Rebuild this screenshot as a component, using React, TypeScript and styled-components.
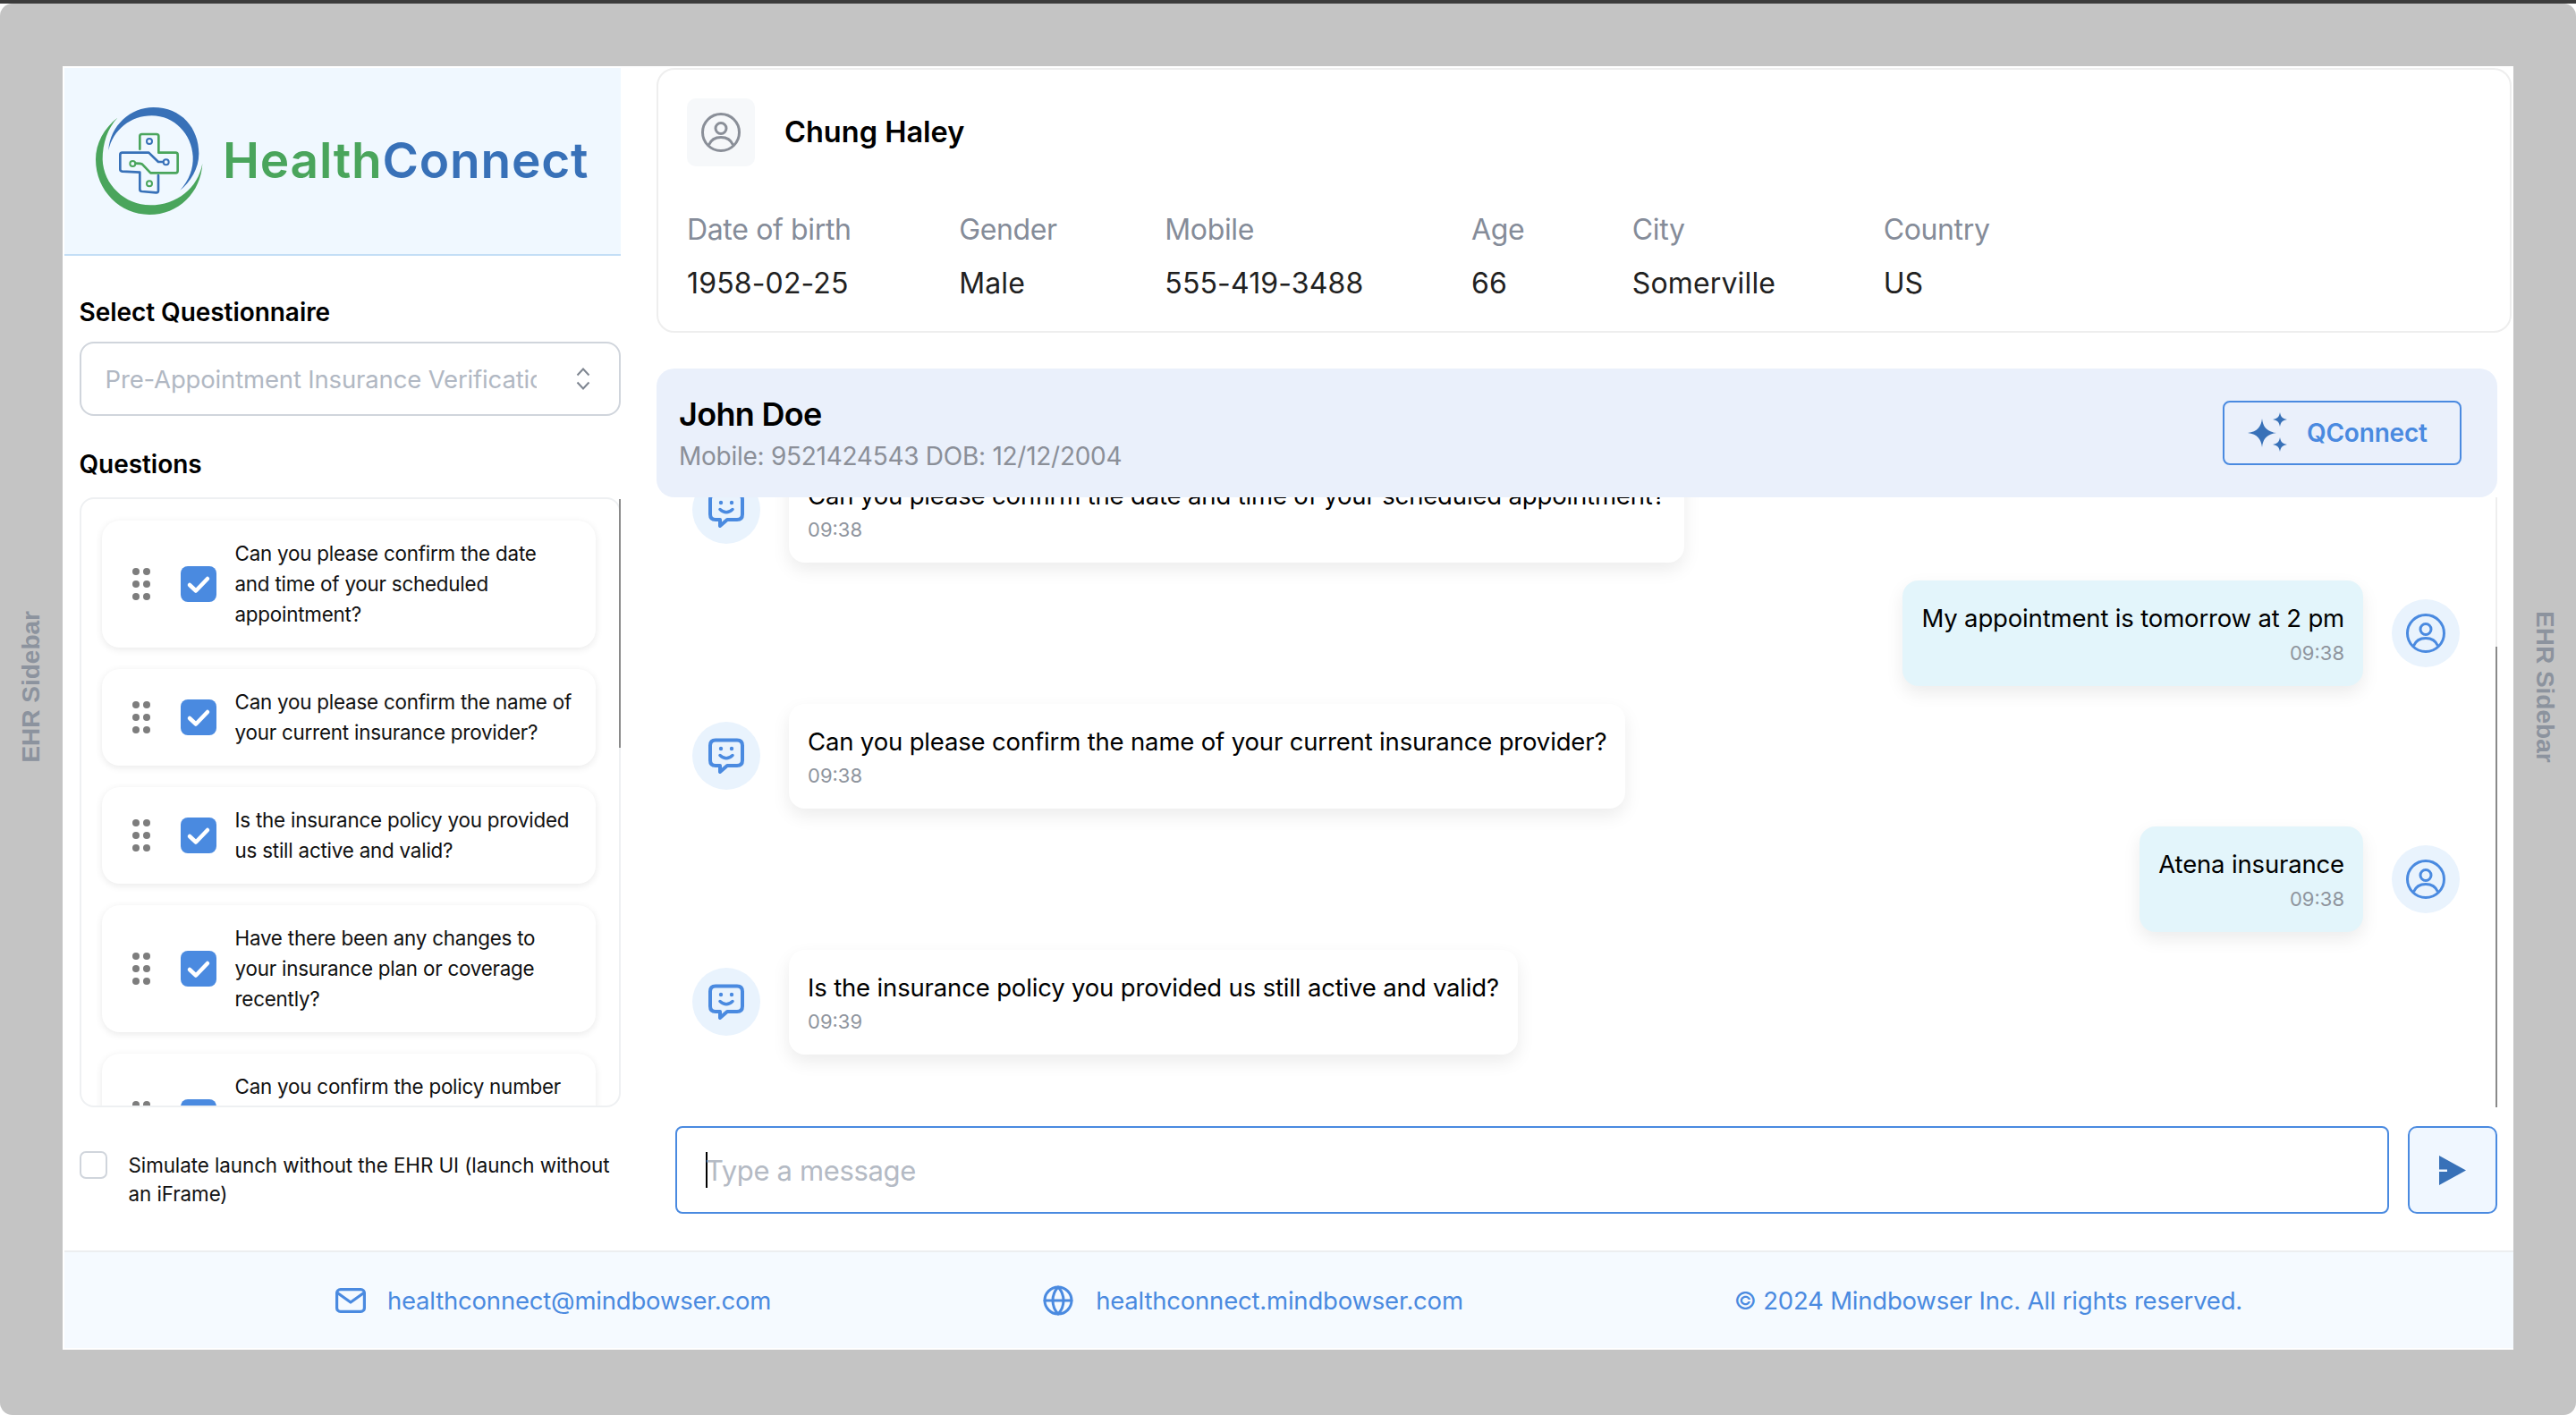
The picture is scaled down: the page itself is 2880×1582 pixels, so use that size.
import React from "react";
import styled, { createGlobalStyle } from "styled-components";
import { Globe } from "lucide-react";

const blue = "#4a8ae0";
const deepBlue = "#3871b8";
const green = "#4aa55c";

const questions = [
  "Can you please confirm the date and time of your scheduled appointment?",
  "Can you please confirm the name of your current insurance provider?",
  "Is the insurance policy you provided us still active and valid?",
  "Have there been any changes to your insurance plan or coverage recently?",
  "Can you confirm the policy number associated with your current insurance?",
];

const details = [
  { label: "Date of birth", value: "1958-02-25" },
  { label: "Gender", value: "Male" },
  { label: "Mobile", value: "555-419-3488" },
  { label: "Age", value: "66" },
  { label: "City", value: "Somerville" },
  { label: "Country", value: "US" },
];

const messages = [
  { from: "bot", text: "Can you please confirm the date and time of your scheduled appointment?", time: "09:38" },
  { from: "user", text: "My appointment is tomorrow at 2 pm", time: "09:38" },
  { from: "bot", text: "Can you please confirm the name of your current insurance provider?", time: "09:38" },
  { from: "user", text: "Atena insurance", time: "09:38" },
  { from: "bot", text: "Is the insurance policy you provided us still active and valid?", time: "09:39" },
];

const GlobalStyle = createGlobalStyle`
  html, body {
    margin: 0;
    padding: 0;
    background: #fff;
  }
  * {
    box-sizing: border-box;
  }
  body {
    font-family: Inter, "Liberation Sans", sans-serif;
  }
`;

const Screen = styled.div`
  width: 2880px;
  height: 1582px;
  display: flex;
  flex-direction: column;
  overflow: hidden;
`;

const TopEdge = styled.div`
  height: 4px;
  background: #3c3c3c;
`;

const Stage = styled.div`
  flex: 1;
  display: grid;
  grid-template-columns: 70px 2740px 70px;
  padding-top: 70px;
  background: #c4c4c4;
  border-radius: 14px;
`;

const Rail = styled.div<{ $flip?: boolean }>`
  display: flex;
  justify-content: center;
  align-items: flex-start;
  padding-top: 609px;

  span {
    writing-mode: vertical-rl;
    transform: ${({ $flip }) => ($flip ? "rotate(180deg)" : "none")};
    font-family: "Liberation Sans", Arial, sans-serif;
    font-size: 28px;
    font-weight: 700;
    color: #8c939e;
  }
`;

const AppFrame = styled.div`
  height: 1435px;
  display: flex;
  flex-direction: column;
  background: #fff;
`;

const Main = styled.div`
  height: 1324px;
  display: flex;
`;

const Sidebar = styled.aside`
  width: 624px;
  flex: none;
  padding: 2px 0 0 2px;
`;

const LogoBar = styled.div`
  height: 210px;
  display: flex;
  align-items: flex-start;
  padding: 44px 0 0 35px;
  background: #f0f8ff;
  border-bottom: 2px solid #c3def6;
`;

const LogoWord = styled.div`
  margin: 25px 0 0 22px;
  font-size: 55px;
  line-height: 68px;
  font-weight: 600;
  letter-spacing: 0.75px;
  color: ${deepBlue};

  b {
    font-weight: 600;
    color: ${green};
  }
`;

const Form = styled.div`
  padding-left: 16.5px;
`;

const FieldLabel = styled.div<{ $top: number; $bottom: number }>`
  margin: ${({ $top }) => $top}px 0 ${({ $bottom }) => $bottom}px;
  font-size: 28px;
  line-height: 36px;
  font-weight: 600;
  letter-spacing: -0.05px;
  color: #000;
`;

const Select = styled.div`
  height: 83px;
  display: flex;
  align-items: center;
  padding: 0 32px 0 27px;
  border: 2px solid #d0d5dc;
  border-radius: 16px;

  span {
    width: 482px;
    overflow: hidden;
    white-space: nowrap;
    font-size: 27.5px;
    letter-spacing: -0.16px;
    color: #b1b8c3;
  }

  svg {
    margin-left: auto;
  }
`;

const ListShell = styled.div`
  position: relative;
`;

const QuestionList = styled.div`
  height: 682px;
  overflow: hidden;
  display: flex;
  flex-direction: column;
  gap: 24px;
  padding: 24px 25px 0 23px;
  border: 2px solid #eef0f2;
  border-radius: 16px;
`;

const ListThumb = styled.div`
  position: absolute;
  top: 2px;
  right: 0;
  width: 2px;
  height: 278px;
  background: #8a8a8a;
`;

const QuestionCard = styled.div`
  flex: none;
  width: 552px;
  display: flex;
  align-items: center;
  padding: 20px 25px 20px 34px;
  background: #fff;
  border-radius: 20px;
  box-shadow: 0 2px 8px rgba(0, 0, 0, 0.09);
`;

const Grip = styled.div`
  flex: none;
  width: 20px;
  margin-right: 34px;
  display: grid;
  grid-template-columns: 8px 8px;
  gap: 6px 4px;

  i {
    height: 8px;
    border-radius: 50%;
    background: #7d7d7d;
  }
`;

const CheckTile = styled.div`
  flex: none;
  width: 40px;
  height: 40px;
  margin-right: 21px;
  border-radius: 8px;
  background: ${blue};
`;

const QuestionText = styled.div`
  font-size: 22.4px;
  line-height: 34px;
  letter-spacing: -0.22px;
  color: #111;
`;

const SimulateRow = styled.div`
  display: flex;
  margin-top: 49px;
  gap: 24px;
`;

const EmptyCheck = styled.div`
  flex: none;
  width: 31px;
  height: 31px;
  border: 2px solid #d0d5dc;
  border-radius: 7px;
`;

const SimulateText = styled.div`
  font-size: 22.4px;
  line-height: 32px;
  letter-spacing: -0.07px;
  color: #111;
`;

const Content = styled.section`
  flex: 1;
  min-width: 0;
  padding: 2px 2px 0 40px;
`;

const PatientCard = styled.div`
  height: 296px;
  padding: 32px;
  border: 2px solid #eeeeee;
  border-radius: 20px;
`;

const PatientHead = styled.div`
  display: flex;
  align-items: center;
  gap: 33px;
`;

const AvatarTile = styled.div`
  width: 76px;
  height: 76px;
  display: flex;
  align-items: center;
  justify-content: center;
  background: #f6f8fa;
  border-radius: 10px;
  color: #8a8f98;
`;

const PatientName = styled.div`
  margin-top: -2px;
  font-size: 32.5px;
  font-weight: 600;
  color: #000;
`;

const DetailRow = styled.div`
  display: flex;
  gap: 120.5px;
  margin-top: 51px;
`;

const DetailLabel = styled.div`
  font-size: 32px;
  line-height: 40px;
  letter-spacing: -0.35px;
  color: #858c99;
`;

const DetailValue = styled.div`
  margin-top: 20px;
  font-size: 32px;
  line-height: 40px;
  letter-spacing: 0.15px;
  color: #212121;
`;

const ChatPanel = styled.div`
  width: 2058px;
  margin-top: 40px;
`;

const ChatHeader = styled.div`
  position: relative;
  z-index: 1;
  height: 144px;
  display: flex;
  align-items: center;
  justify-content: space-between;
  padding: 0 40px 0 25px;
  background: #eaf0fb;
  border-radius: 20px;
`;

const ChatTitle = styled.div`
  font-size: 36px;
  line-height: 44px;
  font-weight: 600;
  letter-spacing: -0.7px;
  color: #000;
`;

const ChatSub = styled.div`
  margin-top: 7px;
  font-size: 28px;
  line-height: 36px;
  letter-spacing: -0.27px;
  color: #8b8f98;
`;

const QConnectButton = styled.button`
  width: 267px;
  height: 72px;
  display: flex;
  align-items: center;
  gap: 20px;
  padding: 0 0 0 26px;
  background: transparent;
  border: 2px solid ${blue};
  border-radius: 8px;
  font-family: inherit;
  font-size: 28px;
  font-weight: 600;
  letter-spacing: -0.2px;
  color: ${blue};
`;

const PaneShell = styled.div`
  position: relative;
`;

const MessagePane = styled.div`
  height: 682px;
  overflow: hidden;
  border-right: 2px solid #eeeeee;
`;

const PaneThumb = styled.div`
  position: absolute;
  top: 167px;
  right: 0;
  width: 2px;
  height: 515px;
  background: #8a8a8a;
`;

const MessageList = styled.div`
  display: flex;
  flex-direction: column;
  gap: 20px;
  margin-top: -44.5px;
`;

const Row = styled.div<{ $mine: boolean }>`
  display: flex;
  align-items: center;
  flex-direction: ${({ $mine }) => ($mine ? "row-reverse" : "row")};
  gap: 32px;
  padding: ${({ $mine }) => ($mine ? "0 40px 0 0" : "0 0 0 40px")};
`;

const AvatarCircle = styled.div`
  flex: none;
  width: 76px;
  height: 76px;
  display: flex;
  align-items: center;
  justify-content: center;
  border-radius: 50%;
  background: #e9f3fd;
  color: ${blue};
`;

const Bubble = styled.div<{ $mine: boolean }>`
  padding: 24px 21px 23px;
  text-align: ${({ $mine }) => ($mine ? "right" : "left")};
  background: ${({ $mine }) => ($mine ? "#e3f5fb" : "#fff")};
  border-radius: 18px;
  box-shadow: 0 8px 20px rgba(0, 0, 0, 0.08);
`;

const BubbleText = styled.div`
  font-size: 27.5px;
  line-height: 36px;
  letter-spacing: -0.16px;
  color: #000;
`;

const BubbleTime = styled.div`
  margin-top: 6.5px;
  font-size: 22px;
  line-height: 28px;
  color: #8f959e;
`;

const Composer = styled.div`
  display: flex;
  gap: 21px;
  margin-top: 21px;
  padding-left: 21px;
`;

const MessageInput = styled.div`
  flex: 1;
  height: 98px;
  display: flex;
  align-items: center;
  padding-left: 32px;
  border: 2px solid ${blue};
  border-radius: 8px;
  font-size: 31px;
  letter-spacing: -0.35px;
  color: #b4bac4;

  i {
    width: 2px;
    height: 40px;
    margin-right: -2px;
    background: #000;
  }
`;

const SendButton = styled.button`
  width: 100px;
  height: 98px;
  display: flex;
  align-items: center;
  justify-content: center;
  padding: 0;
  background: #f0f7ff;
  border: 2px solid ${blue};
  border-radius: 10px;
`;

const Footer = styled.footer`
  flex: 1;
  margin: 0 0 2px 2px;
  display: flex;
  align-items: center;
  justify-content: space-evenly;
  background: #f5faff;
  border-top: 2px solid #eceef0;
`;

const FooterItem = styled.div`
  display: flex;
  align-items: center;
  gap: 24px;
  font-size: 27.5px;
  letter-spacing: -0.2px;
  color: ${blue};
`;

function Logo() {
  return (
    <svg width="120" height="120" viewBox="52 60 360 360" fill="none">
      <path
        d="M95 205C100 120 170 60 245 60C340 60 398 130 398 215C398 265 370 310 335 338C365 305 380 265 378 225C375 150 315 88 240 88C170 88 110 135 95 205Z"
        fill={deepBlue}
      />
      <path
        d="M125 95C80 130 52 180 52 235C52 340 135 420 232 420C330 420 405 345 410 248C395 330 325 388 235 388C150 388 78 320 75 235C75 180 92 130 125 95Z"
        fill={green}
      />
      <g strokeWidth="8" strokeLinejoin="round" strokeLinecap="round">
        <path
          d="M200 200V157Q200 150 207 150H256Q263 150 263 157V212H320Q327 212 327 219V273Q327 280 320 280H236L208 251Q204 248 186 248"
          stroke={green}
        />
        <path
          d="M262 288V339Q262 347 254 346L207 342Q200 341 200 335V278L141 275Q134 274 134 268V219Q134 212 141 212H230L262 243H278"
          stroke={deepBlue}
        />
        <circle cx="232" cy="174" r="9" stroke={deepBlue} strokeWidth="6" />
        <circle cx="288" cy="244" r="9" stroke={deepBlue} strokeWidth="6" />
        <circle cx="176" cy="249" r="9" stroke={green} strokeWidth="6" />
        <circle cx="232" cy="316" r="9" stroke={green} strokeWidth="6" />
      </g>
    </svg>
  );
}

function SelectChevrons() {
  return (
    <svg width="16" height="25" viewBox="0 0 16 25" fill="none" stroke="#7f8691" strokeWidth="2">
      <path d="M1.5 8.5L8 1.5L14.5 8.5" />
      <path d="M1.5 16.5L8 23.5L14.5 16.5" />
    </svg>
  );
}

function Check() {
  return (
    <svg width="40" height="40" viewBox="0 0 40 40" fill="none" stroke="#fff" strokeWidth="4.5" strokeLinecap="round" strokeLinejoin="round">
      <path d="M10 21L17 27.5L30 14" />
    </svg>
  );
}

function UserIcon({ size = 44 }: { size?: number }) {
  return (
    <svg width={size} height={size} viewBox="0 0 44 44" fill="none" stroke="currentColor" strokeWidth="3">
      <circle cx="22" cy="22" r="20.5" />
      <circle cx="22" cy="17.5" r="6" />
      <path d="M8.5 36C11 30 16 27.5 22 27.5C28 27.5 33 30 35.5 36" />
    </svg>
  );
}

function BotIcon() {
  return (
    <svg width="40" height="40" viewBox="0 0 40 40" fill="none">
      <path
        d="M8 2.5H32Q38 2.5 38 8.5V25Q38 31 32 31H21L13 38V31H8Q2 31 2 25V8.5Q2 2.5 8 2.5Z"
        stroke={blue}
        strokeWidth="4"
        strokeLinejoin="round"
      />
      <circle cx="14" cy="12" r="2.2" fill={blue} />
      <circle cx="26" cy="12" r="2.2" fill={blue} />
      <path d="M13 19.5Q20 26 27 19.5" stroke={blue} strokeWidth="3.5" strokeLinecap="round" />
    </svg>
  );
}

function Sparkles() {
  return (
    <svg width="46" height="46" viewBox="0 0 46 46" fill={deepBlue}>
      <path d="M16 7C17 16 21 21.5 32 23C21 24.5 17 30 16 39C15 30 11 24.5 0 23C11 21.5 15 16 16 7Z" />
      <path d="M36 0C37 5 38.5 7 44 8C38.5 9 37 11 36 16C35 11 33.5 9 28 8C33.5 7 35 5 36 0Z" />
      <path d="M36 28C37 33 38.5 35 44 36C38.5 37 37 39 36 44C35 39 33.5 37 28 36C33.5 35 35 33 36 28Z" />
    </svg>
  );
}

function SendIcon() {
  return (
    <svg width="30" height="33" viewBox="0 0 30 33" fill={deepBlue}>
      <path d="M0 0L30 16.5L0 33V18H9V15.5H0Z" />
    </svg>
  );
}

function MailIcon() {
  return (
    <svg width="34" height="28" viewBox="0 0 34 28" fill="none" stroke={blue} strokeWidth="3.2" strokeLinejoin="round" strokeLinecap="round">
      <rect x="1.6" y="1.6" width="30.8" height="24.8" rx="4" />
      <path d="M3 6L17 16L31 6" />
    </svg>
  );
}

export default function App() {
  return (
    <Screen>
      <GlobalStyle />
      <TopEdge />
      <Stage>
        <Rail $flip>
          <span>EHR Sidebar</span>
        </Rail>
        <AppFrame>
          <Main>
            <Sidebar>
              <LogoBar>
                <Logo />
                <LogoWord>
                  <b>Health</b>Connect
                </LogoWord>
              </LogoBar>
              <Form>
                <FieldLabel $top={45} $bottom={15}>Select Questionnaire</FieldLabel>
                <Select>
                  <span>Pre-Appointment Insurance Verification</span>
                  <SelectChevrons />
                </Select>
                <FieldLabel $top={36} $bottom={19}>Questions</FieldLabel>
                <ListShell>
                  <QuestionList>
                    {questions.map((q) => (
                      <QuestionCard key={q}>
                        <Grip>
                          <i /><i /><i /><i /><i /><i />
                        </Grip>
                        <CheckTile>
                          <Check />
                        </CheckTile>
                        <QuestionText>{q}</QuestionText>
                      </QuestionCard>
                    ))}
                  </QuestionList>
                  <ListThumb />
                </ListShell>
                <SimulateRow>
                  <EmptyCheck />
                  <SimulateText>Simulate launch without the EHR UI (launch without an iFrame)</SimulateText>
                </SimulateRow>
              </Form>
            </Sidebar>
            <Content>
              <PatientCard>
                <PatientHead>
                  <AvatarTile>
                    <UserIcon />
                  </AvatarTile>
                  <PatientName>Chung Haley</PatientName>
                </PatientHead>
                <DetailRow>
                  {details.map((d) => (
                    <div key={d.label}>
                      <DetailLabel>{d.label}</DetailLabel>
                      <DetailValue>{d.value}</DetailValue>
                    </div>
                  ))}
                </DetailRow>
              </PatientCard>
              <ChatPanel>
                <ChatHeader>
                  <div>
                    <ChatTitle>John Doe</ChatTitle>
                    <ChatSub>Mobile: 9521424543 DOB: 12/12/2004</ChatSub>
                  </div>
                  <QConnectButton>
                    <Sparkles />
                    QConnect
                  </QConnectButton>
                </ChatHeader>
                <PaneShell>
                  <MessagePane>
                    <MessageList>
                      {messages.map((m) => (
                        <Row key={m.text} $mine={m.from === "user"}>
                          <AvatarCircle>{m.from === "user" ? <UserIcon /> : <BotIcon />}</AvatarCircle>
                          <Bubble $mine={m.from === "user"}>
                            <BubbleText>{m.text}</BubbleText>
                            <BubbleTime>{m.time}</BubbleTime>
                          </Bubble>
                        </Row>
                      ))}
                    </MessageList>
                  </MessagePane>
                  <PaneThumb />
                </PaneShell>
                <Composer>
                  <MessageInput>
                    <i />
                    Type a message
                  </MessageInput>
                  <SendButton>
                    <SendIcon />
                  </SendButton>
                </Composer>
              </ChatPanel>
            </Content>
          </Main>
          <Footer>
            <FooterItem>
              <MailIcon />
              healthconnect@mindbowser.com
            </FooterItem>
            <FooterItem>
              <Globe size={36} color={blue} strokeWidth={2} />
              healthconnect.mindbowser.com
            </FooterItem>
            <FooterItem>© 2024 Mindbowser Inc. All rights reserved.</FooterItem>
          </Footer>
        </AppFrame>
        <Rail>
          <span>EHR Sidebar</span>
        </Rail>
      </Stage>
    </Screen>
  );
}
